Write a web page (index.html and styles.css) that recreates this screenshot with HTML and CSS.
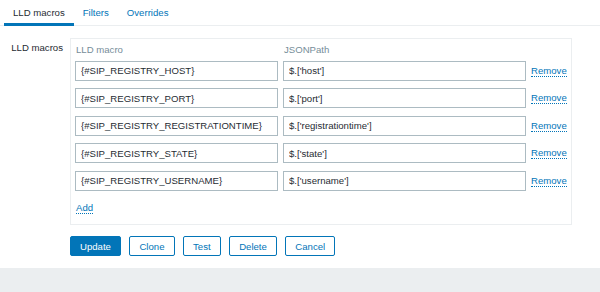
FILE: index.html
```html
<!DOCTYPE html>
<html lang="en">
<head>
    <meta charset="UTF-8">
    <title>LLD macros</title>
    <link rel="stylesheet" href="styles.css">
</head>
<body>
    <div class="page">
        <ul class="tabs">
            <li class="tab active">LLD macros</li>
            <li class="tab">Filters</li>
            <li class="tab">Overrides</li>
        </ul>

        <div class="form-row">
            <label class="form-label">LLD macros</label>
            <div class="macro-box">
                <div class="macro-table">
                    <div class="col-head">LLD macro</div>
                    <div class="col-head">JSONPath</div>
                    <div></div>

                    <input type="text" value="{#SIP_REGISTRY_HOST}">
                    <input type="text" value="$.['host']">
                    <a class="link-action">Remove</a>

                    <input type="text" value="{#SIP_REGISTRY_PORT}">
                    <input type="text" value="$.['port']">
                    <a class="link-action">Remove</a>

                    <input type="text" value="{#SIP_REGISTRY_REGISTRATIONTIME}">
                    <input type="text" value="$.['registrationtime']">
                    <a class="link-action">Remove</a>

                    <input type="text" value="{#SIP_REGISTRY_STATE}">
                    <input type="text" value="$.['state']">
                    <a class="link-action">Remove</a>

                    <input type="text" value="{#SIP_REGISTRY_USERNAME}">
                    <input type="text" value="$.['username']">
                    <a class="link-action">Remove</a>
                </div>
                <a class="link-action add">Add</a>
            </div>
        </div>

        <div class="buttons">
            <button class="btn primary">Update</button>
            <button class="btn">Clone</button>
            <button class="btn">Test</button>
            <button class="btn">Delete</button>
            <button class="btn">Cancel</button>
        </div>
    </div>
    <div class="footer"></div>
</body>
</html>
```

FILE: styles.css
```css
:root {
    --text-color: #1f2c33;
    --link-color: #0275b8;
    --muted-color: #768d99;
    --border-light: #ebeef0;
    --input-border: #acbbc2;
}

* {
    box-sizing: border-box;
    margin: 0;
    padding: 0;
}

body {
    font-family: 'Liberation Sans', Arial, sans-serif;
    font-size: 9.6px;
    color: var(--text-color);
    background: #fff;
}

.page {
    height: 268px;
    background: #fff;
}

.tabs {
    list-style: none;
    display: flex;
    height: 26px;
    padding-left: 4px;
    border-bottom: 1px solid var(--border-light);
}

.tab {
    padding: 0 9px;
    line-height: 25px;
    color: var(--link-color);
    position: relative;
}

.tab.active {
    color: var(--text-color);
}

.tab.active::after {
    content: '';
    position: absolute;
    left: 0;
    right: 0;
    bottom: -1px;
    height: 3px;
    background: var(--link-color);
}

.form-row {
    display: flex;
    gap: 7px;
    margin-top: 12px;
}

.form-label {
    width: 63px;
    text-align: right;
    padding-top: 4px;
    line-height: 12px;
}

.macro-box {
    width: 502px;
    height: 187px;
    border: 1px solid var(--border-light);
    padding: 5px 5px 0 4px;
}

.macro-table {
    display: grid;
    grid-template-columns: 203px 243px auto;
    column-gap: 5px;
    row-gap: 7.5px;
    align-items: center;
}

.col-head {
    color: var(--muted-color);
    line-height: 12px;
    padding-left: 1px;
    margin-bottom: -3px;
}

input {
    height: 20px;
    border: 1px solid var(--input-border);
    padding: 0 5px;
    font-family: inherit;
    font-size: 9.6px;
    color: var(--text-color);
    background: #fff;
}

.link-action {
    color: var(--link-color);
    border-bottom: 1px dotted var(--link-color);
    line-height: 11px;
    justify-self: start;
    cursor: pointer;
}

.add {
    display: inline-block;
    margin: 11px 0 0 1px;
}

.buttons {
    display: flex;
    gap: 8.5px;
    margin: 11px 0 0 70px;
}

.btn {
    height: 20px;
    padding: 0 9px;
    border: 1px solid var(--link-color);
    border-radius: 2px;
    background: #fff;
    color: var(--link-color);
    font-family: inherit;
    font-size: 9.6px;
}

.btn.primary {
    background: var(--link-color);
    color: #fff;
}

.footer {
    height: 24px;
    background: var(--border-light);
}
```
